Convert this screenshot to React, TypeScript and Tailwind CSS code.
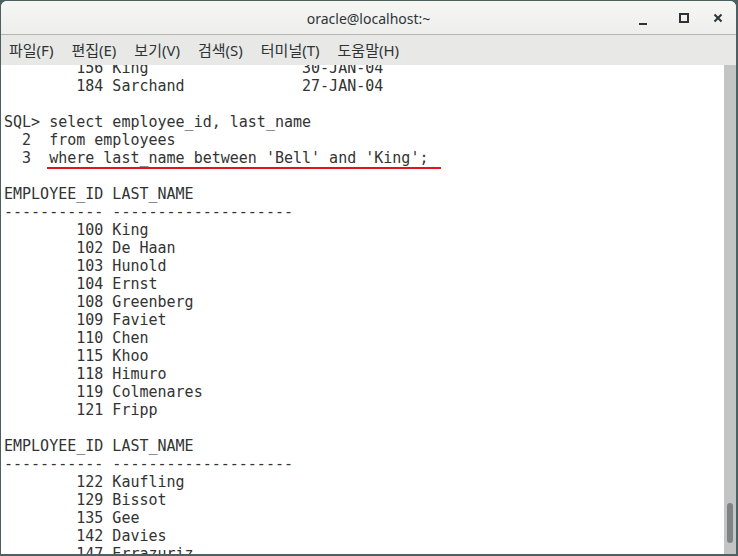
const lines = [
  '        156 King                 30-JAN-04',
  '        184 Sarchand             27-JAN-04',
  '',
  'SQL> select employee_id, last_name',
  '  2  from employees',
  "  3  where last_name between 'Bell' and 'King';",
  '',
  'EMPLOYEE_ID LAST_NAME',
  '----------- --------------------',
  '        100 King',
  '        102 De Haan',
  '        103 Hunold',
  '        104 Ernst',
  '        108 Greenberg',
  '        109 Faviet',
  '        110 Chen',
  '        115 Khoo',
  '        118 Himuro',
  '        119 Colmenares',
  '        121 Fripp',
  '',
  'EMPLOYEE_ID LAST_NAME',
  '----------- --------------------',
  '        122 Kaufling',
  '        129 Bissot',
  '        135 Gee',
  '        142 Davies',
  '        147 Errazuriz',
];

const menus = ['파일(F)', '편집(E)', '보기(V)', '검색(S)', '터미널(T)', '도움말(H)'];

const App = () => {
  return (
    <div className="w-[738px] h-[556px] bg-[#4d6061] pt-[1px] pl-[1px] pr-[2px] pb-[2px]">
      <div className="flex h-full flex-col overflow-hidden rounded-t-[6px] bg-white">
        {/* Title bar */}
        <div className="grid h-[34px] shrink-0 grid-cols-[1fr_auto_1fr] items-center border-b border-[#b6b6b3] bg-gradient-to-b from-[#f6f6f5] to-[#eeeeed] font-['Noto_Sans',sans-serif] text-[14px] text-[#2e3436]">
          <div />
          <div className="pt-[1px]">oracle@localhost:~</div>
          <div className="flex items-center justify-end pr-[13px]">
            <svg width="10" height="10" viewBox="0 0 10 10" className="mr-[31px] mt-[6px]">
              <rect x="1" y="7" width="8" height="2" fill="#2e3436" />
            </svg>
            <svg width="10" height="10" viewBox="0 0 10 10" className="mr-[24px]">
              <rect x="1" y="1" width="8" height="8" fill="none" stroke="#2e3436" strokeWidth="2" />
            </svg>
            <svg width="10" height="10" viewBox="0 0 10 10">
              <path d="M1.5 1.5 L8.5 8.5 M8.5 1.5 L1.5 8.5" stroke="#2e3436" strokeWidth="2" />
            </svg>
          </div>
        </div>

        {/* Menu bar */}
        <div className="flex h-[30px] shrink-0 items-center gap-[18px] bg-[#e8e8e7] pl-[8px] pt-[1px] font-['Noto_Sans','Noto_Sans_CJK_KR',sans-serif] text-[15px] text-[#2e3436]">
          {menus.map(m => (
            <span key={m}>{m}</span>
          ))}
        </div>

        {/* Terminal */}
        <div className="flex min-h-0 flex-1">
          <div className="relative min-w-0 flex-1 overflow-hidden bg-white">
            <pre className="mt-[-6px] pl-[3px] font-['DejaVu_Sans_Mono',monospace] text-[15px] leading-[18px] text-[#333333]">
              {lines.map((l, i) => (
                <div key={i} className="h-[18px]">{l}</div>
              ))}
            </pre>
            <div className="absolute left-[46px] top-[102px] h-[2px] w-[394px] bg-[#e4131b]" />
          </div>
          <div className="flex w-[12px] shrink-0 flex-col justify-end bg-[#c3c4c4] pb-[11px] pl-[3px]">
            <div className="h-[40px] w-[6px] rounded-full bg-[#7f8383]" />
          </div>
        </div>
      </div>
    </div>
  );
};

export default App;
